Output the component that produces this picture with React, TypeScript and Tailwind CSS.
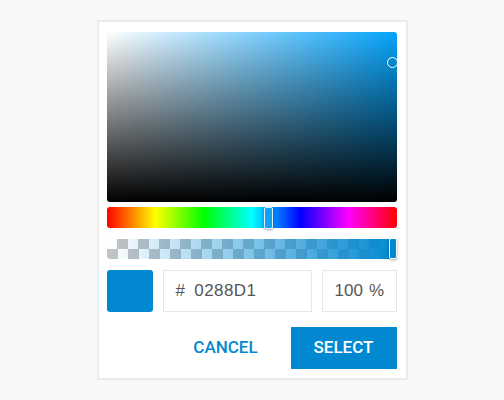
import React, { useState } from "react"

const HEX = "0288D1"

const App = () => {
  const [alpha] = useState(100)

  return (
    <section className="min-h-screen bg-[#f8f8f8] pt-5 flex justify-center">
      <div className="w-[311px] h-[360px] border-2 border-[#ebebeb] bg-white pl-2 pr-[9px] pt-[10px] pb-[9px] flex flex-col">
        {/* saturation / value area */}
        <div className="relative h-[170px] rounded-[3px] bg-[linear-gradient(to_top,#000,transparent),linear-gradient(to_right,#fff,#05a3fb)]">
          <span className="absolute left-[280px] top-[25px] size-[11px] rounded-full border-[1.5px] border-white" />
        </div>

        {/* hue */}
        <div className="relative mt-[5px] h-[21px] rounded-[3px] bg-[linear-gradient(to_right,#f00,#ff0,#0f0,#0ff,#00f,#f0f,#f00)]">
          <span className="absolute left-[157px] top-0 h-[22px] w-[9px] rounded-[2px] border border-[#dff1ff] bg-[#12a2f4] shadow-[0_1px_3px_rgba(0,0,0,0.35)]" />
        </div>

        {/* alpha */}
        <div className="relative mt-[11px] h-[20px] rounded-[3px] bg-[conic-gradient(#c4c4c4_25%,#fff_0_50%,#c4c4c4_0_75%,#fff_0)] bg-[length:21px_20px]">
          <div className="absolute inset-0 rounded-[3px] bg-[linear-gradient(to_right,rgba(2,136,209,0),#0288d1)]" />
          <span className="absolute left-[282px] -top-px h-[21px] w-[8px] rounded-[2px] border border-white bg-[#0288d1] shadow-[0_1px_3px_rgba(0,0,0,0.35)]" />
        </div>

        {/* current colour + inputs */}
        <div className="mt-[11px] flex h-[42px] gap-[10px] font-['Liberation_Sans',Arial,sans-serif] text-[17px] text-[#555]">
          <div className="w-[46px] rounded-[3px] bg-[#0288d1]" />
          <div className="flex w-[149px] items-center border border-[#e6e6e6] pl-[12px] tracking-[0.4px]">
            <span>#</span>
            <span className="ml-[9px]">{HEX}</span>
          </div>
          <div className="flex flex-1 items-center border border-[#e6e6e6] pl-[12px]">
            <span>{alpha}</span>
            <span className="ml-[6px]">%</span>
          </div>
        </div>

        <div className="mt-[15px] flex h-[42px] justify-end gap-3 font-['Roboto',sans-serif] text-[17px] font-medium">
          <button className="w-[106px] text-[#0288d1]">CANCEL</button>
          <button className="w-[106px] bg-[#0288d1] text-white">SELECT</button>
        </div>
      </div>
    </section>
  )
}

export default App
